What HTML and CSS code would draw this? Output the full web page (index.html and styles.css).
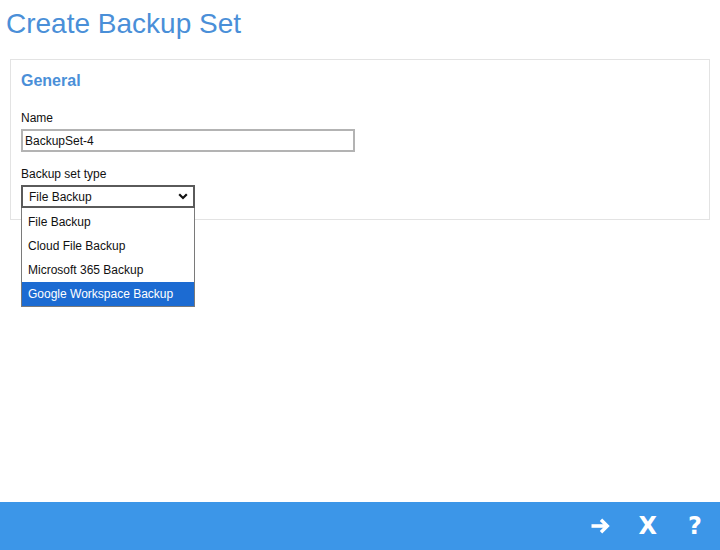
FILE: index.html
```html
<!DOCTYPE html>
<html lang="en">
<head>
    <meta charset="UTF-8">
    <meta name="viewport" content="width=device-width, initial-scale=1.0">
    <title>Create Backup Set</title>
    <link rel="stylesheet" href="styles.css">
</head>
<body>
    <div class="page">
        <main class="content">
            <h1 class="page-title">Create Backup Set</h1>

            <section class="panel">
                <h2 class="panel-title">General</h2>

                <label class="field-label" for="name">Name</label>
                <input class="text-input" id="name" type="text" value="BackupSet-4">

                <label class="field-label type-label">Backup set type</label>
                <div class="select-wrap">
                    <div class="select-box">
                        <span>File Backup</span>
                        <svg class="chevron" width="10" height="7" viewBox="0 0 10 7">
                            <path d="M1.2 1.3 L5 5 L8.8 1.3" fill="none" stroke="#111" stroke-width="2.2"/>
                        </svg>
                    </div>
                    <!-- opened list -->
                    <ul class="select-list">
                        <li>File Backup</li>
                        <li>Cloud File Backup</li>
                        <li>Microsoft 365 Backup</li>
                        <li class="selected">Google Workspace Backup</li>
                    </ul>
                </div>
            </section>
        </main>

        <footer class="footer">
            <svg class="icon-next" width="20" height="16" viewBox="0 0 20 16">
                <path d="M0.5 8 H16.5" stroke="#fff" stroke-width="3.6"/>
                <path d="M10 1.8 L16.3 8 L10 14.2" fill="none" stroke="#fff" stroke-width="3.4"/>
            </svg>
            <span class="icon-text icon-close">X</span>
            <span class="icon-text icon-help">?</span>
        </footer>
    </div>
</body>
</html>
```

FILE: styles.css
```css
body {
    margin: 0;
    font-family: "Liberation Sans", Arial, sans-serif;
    background-color: #fff;
    color: #111;
}

.page {
    display: flex;
    flex-direction: column;
    height: 550px;
}

.content {
    flex: 1;
}

.page-title {
    margin: 0;
    padding: 8px 0 0 6px;
    font-size: 28px;
    line-height: 32px;
    font-weight: normal;
    color: #4a8fd8;
}

.panel {
    margin: 19px 10px 0 10px;
    border: 1px solid #e3e3e3;
    padding: 12px 10px 11px 10px;
    display: flex;
    flex-direction: column;
    align-items: flex-start;
}

.panel-title {
    margin: 0 0 21px 0;
    font-size: 16px;
    line-height: 18px;
    font-weight: bold;
    color: #4a8fd8;
}

.field-label {
    font-size: 12px;
    line-height: 14px;
    margin-bottom: 4px;
}

.type-label {
    margin-top: 15px;
}

.text-input {
    box-sizing: border-box;
    width: 334px;
    height: 23px;
    margin: 0;
    padding: 0 0 0 2px;
    border: 2px solid #b3b3b3;
    font-family: "Liberation Sans", Arial, sans-serif;
    font-size: 12px;
    color: #111;
    outline: none;
}

/* select */
.select-wrap {
    position: relative;
    width: 174px;
}

.select-box {
    box-sizing: border-box;
    height: 23px;
    border: 2px solid #5a5a5a;
    padding: 0 5px 0 6px;
    display: flex;
    align-items: center;
    justify-content: space-between;
    font-size: 12px;
}

.select-list {
    position: absolute;
    top: 23px;
    left: 0;
    width: 174px;
    box-sizing: border-box;
    margin: 0;
    padding: 2px 0 0 0;
    list-style: none;
    background-color: #fff;
    border: 1px solid #7a7a7a;
    border-top: none;
}

.select-list li {
    height: 24px;
    line-height: 24px;
    padding-left: 6px;
    font-size: 12px;
    color: #111;
}

.select-list li.selected {
    background-color: #1c6bd2;
    color: #fff;
}

/* footer */
.footer {
    height: 48px;
    background-color: #3c96e8;
    display: flex;
    align-items: center;
    justify-content: flex-end;
    padding-right: 18px;
}

.icon-text {
    font-family: "DejaVu Sans", sans-serif;
    font-weight: bold;
    font-size: 24px;
    line-height: 24px;
    color: #fff;
}

.icon-close {
    margin-left: 28px;
}

.icon-help {
    margin-left: 31px;
}
```
